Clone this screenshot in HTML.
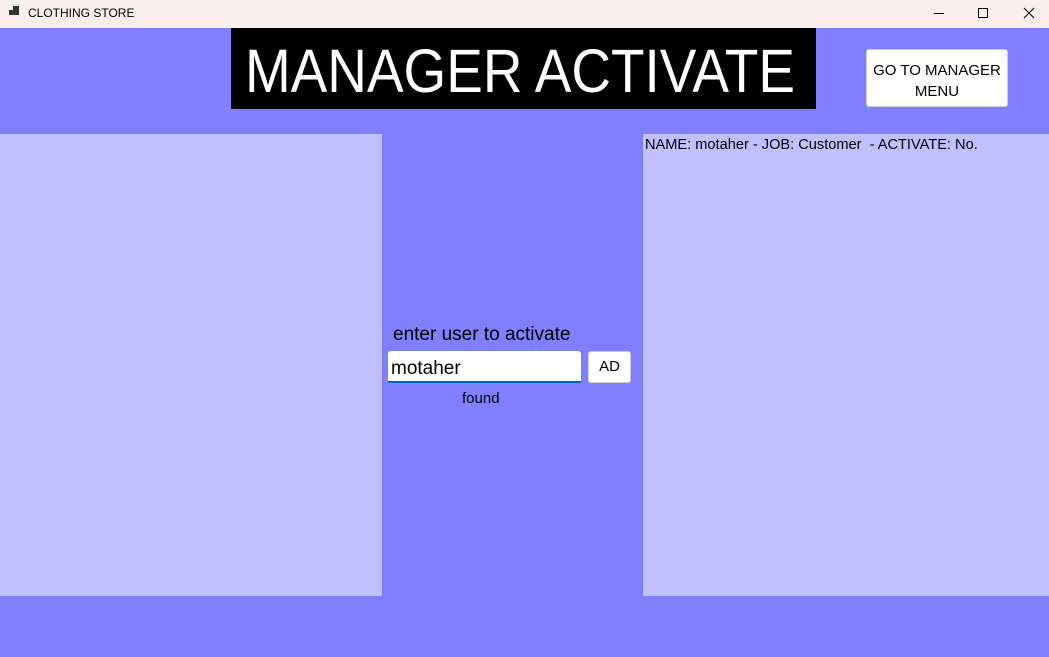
<!DOCTYPE html>
<html><head><meta charset="utf-8"><style>
*{margin:0;padding:0;box-sizing:border-box}
body{width:1049px;height:657px;overflow:hidden;background:#8080ff;font-family:"Liberation Sans",sans-serif;position:relative}
.tb{position:absolute;left:0;top:0;width:1049px;height:28px;background:#f9efee}
.tb .t{position:absolute;left:28px;top:6px;font-size:12px;color:#000}
.a{position:absolute}
</style></head><body>
<div class="tb">
<div class="a" style="left:9px;top:10px;width:5px;height:5px;background:#333"></div>
<div class="a" style="left:13px;top:6px;width:6px;height:9px;background:#333"></div>
<div class="t">CLOTHING STORE</div>
<svg class="a" style="left:930px;top:6px" width="110" height="16"><line x1="4" y1="7.5" x2="14" y2="7.5" stroke="#000"/><rect x="48.5" y="2.5" width="9" height="9" fill="none" stroke="#000"/><path d="M94 2 L104 12 M104 2 L94 12" stroke="#000"/></svg>
</div>
<div class="a" style="left:231px;top:28px;width:585px;height:81px;background:#000;overflow:hidden">
<span class="a" style="left:289px;top:0;color:#fff;font-size:61px;line-height:86px;white-space:nowrap;transform:translateX(-50%) scaleX(0.9);transform-origin:center">MANAGER ACTIVATE</span></div>
<div class="a" style="left:866px;top:49px;width:142px;height:58px;background:#fff;border:1px solid #ccc;border-radius:3px;font-size:15px;text-align:center;padding-top:10px;line-height:21px;color:#000;white-space:nowrap">GO TO MANAGER<br>MENU</div>
<div class="a" style="left:0;top:134px;width:382px;height:462px;background:#c0c0ff"></div>
<div class="a" style="left:643px;top:134px;width:406px;height:462px;background:#c0c0ff;font-size:14.6px;padding:3px 0 0 2px;color:#000;white-space:pre">NAME: motaher - JOB: Customer  - ACTIVATE: No.</div>
<div class="a" style="left:393px;top:324px;font-size:19px;color:#000;white-space:nowrap">enter user to activate</div>
<div class="a" style="left:388px;top:351px;width:193px;height:32px;background:#fff;border-bottom:2px solid #0067c0;border-radius:3px 3px 0 0;font-size:19px;padding:7px 0 0 3px;color:#000">motaher</div>
<div class="a" style="left:588px;top:351px;width:43px;height:32px;background:#fff;border:1px solid #ccc;border-radius:3px;font-size:15px;text-align:center;line-height:29px;color:#000">AD</div>
<div class="a" style="left:462px;top:390px;font-size:15px;color:#000">found</div>
</body></html>
